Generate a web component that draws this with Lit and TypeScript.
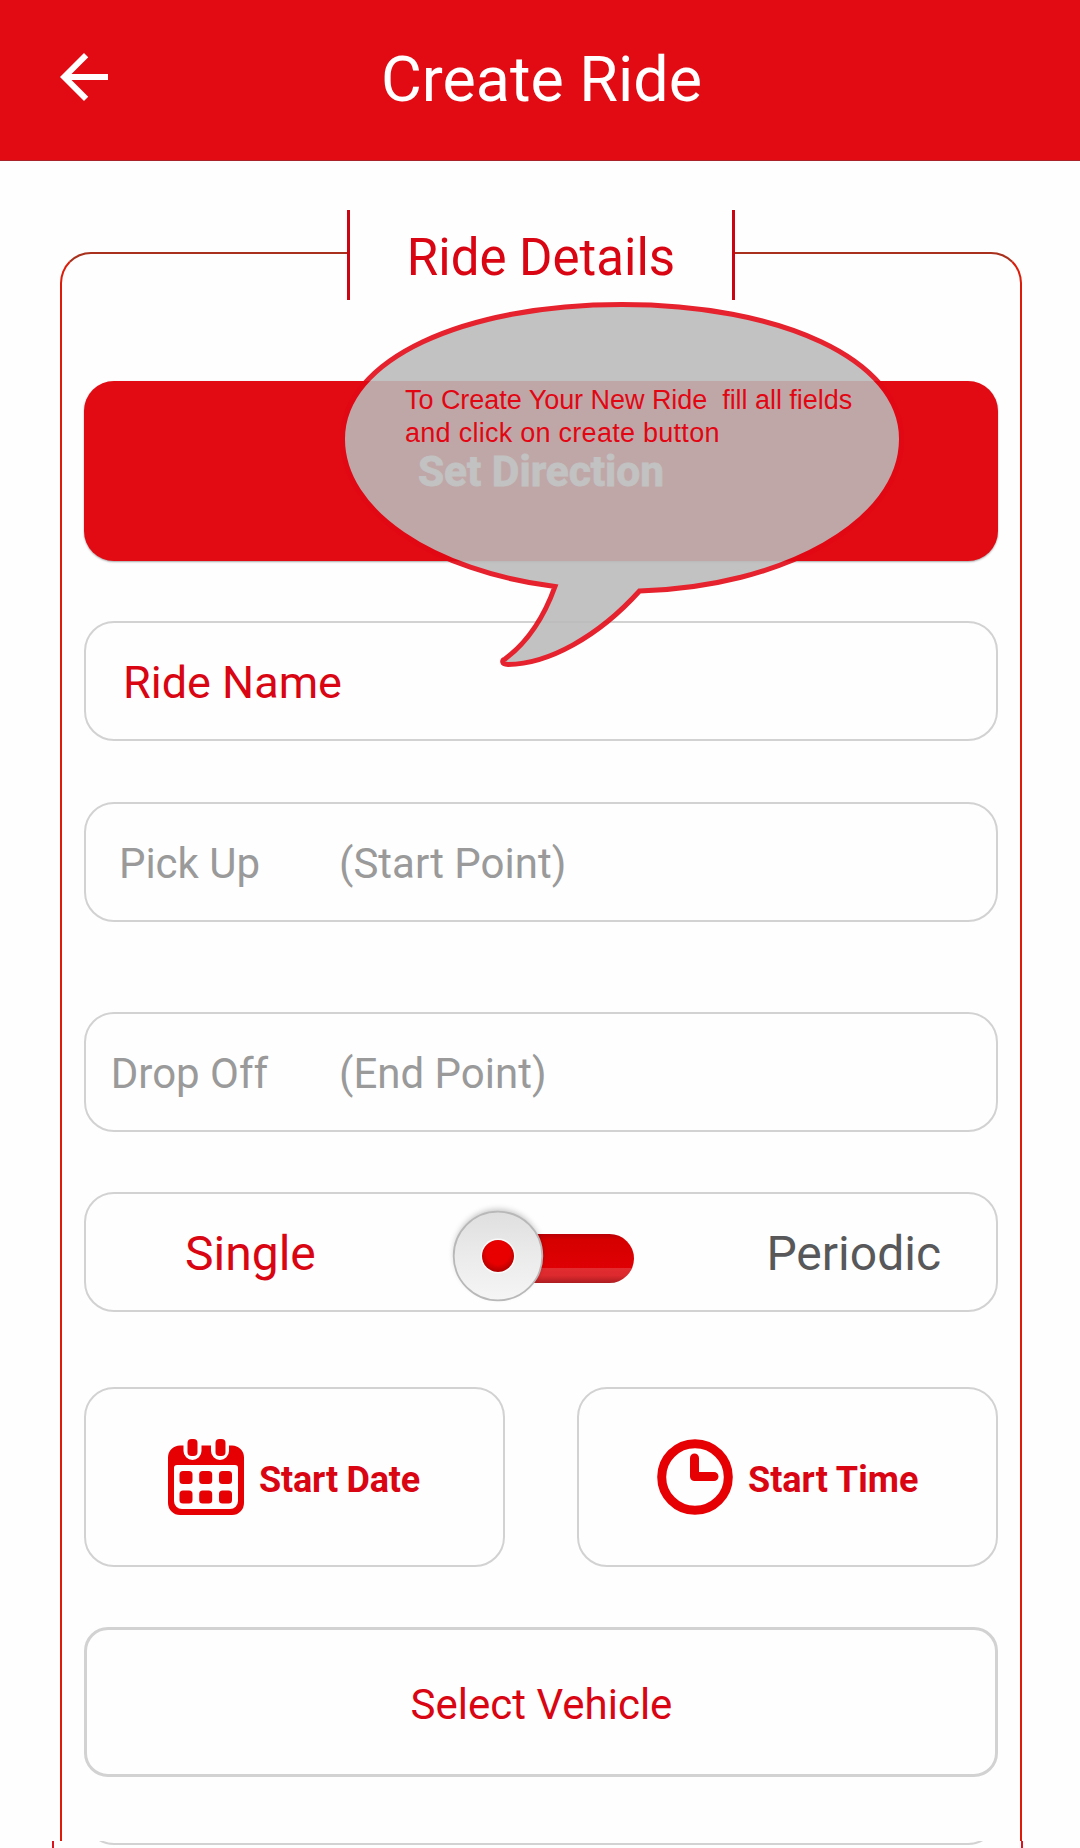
import { LitElement, html, css } from "lit";
import { customElement } from "lit/decorators.js";

@customElement("app-root")
export class AppRoot extends LitElement {
  static styles = css`
    :host {
      display: block;
      height: 1848px;
      overflow: hidden;
      background: #fefefe;
      font-family: Roboto, "Liberation Sans", sans-serif;
      color: #d90512;
    }
    * { box-sizing: border-box; }
    svg { display: block; flex: none; }
    .bar {
      height: 161px;
      background: #e20a13;
      border-bottom: 1px solid #a8242a;
      display: grid;
      grid-template-columns: 120px 1fr 120px;
      align-items: start;
      color: #fff;
    }
    .back { margin: 41px 0 0 48px; }
    .title {
      margin: 0;
      padding-top: 40px;
      text-align: center;
      font-size: 62.8px;
      line-height: 80px;
      font-weight: 400;
      white-space: nowrap;
      padding-left: 3px;
    }
    .frame {
      width: 962px;
      height: 1589px;
      margin: 91px 0 0 60px;
      padding: 0 22px;
      border: 2px solid #dc1c08;
      border-top-color: #a8301c;
      border-bottom: 0;
      border-radius: 31px 31px 0 0;
      display: flex;
      flex-direction: column;
      position: relative;
    }
    .legend {
      flex: none;
      align-self: center;
      width: 388px;
      height: 90px;
      margin: -44px 0 82px;
      background: #fefefe;
      border: solid #cb0412;
      border-width: 0 3px;
      text-align: center;
      font-size: 51px;
      line-height: 96px;
      font-weight: 400;
    }
    .button {
      flex: none;
      height: 180px;
      margin-top: -1px;
      border: 0;
      border-radius: 30px;
      background: #e20a13;
      box-shadow: 0 1px 2px rgba(0, 0, 0, 0.35);
      color: #fff;
      font: 700 42.4px/180px Roboto, sans-serif;
      -webkit-text-stroke: 0.8px #fff;
      text-align: center;
      padding: 1px 0 0;
    }
    .card {
      flex: none;
      border: 2px solid #d2d2d2;
      border-radius: 30px;
      display: flex;
      align-items: center;
    }
    .field { height: 120px; margin-top: 60px; }
    .name { padding: 2px 0 0 37px; font-size: 45px; }
    .point { color: #9a9a9a; font-size: 42px; padding-top: 2px; }
    .pick { margin-top: 61px; }
    .key { width: 207px; text-align: center; }
    .value { margin-left: 46px; }
    .drop { margin-top: 90px; }
    .mode { font-size: 48px; justify-content: space-between; padding: 2px 55px 0 99px; }
    .off { color: #58585a; }
    .toggle { margin: 4px 4px 0 0; }
    .pair { flex: none; display: flex; justify-content: space-between; margin-top: 75px; }
    .tile { width: 421px; height: 180px; font-size: 36px; font-weight: 700; gap: 15px; }
    .label { padding-top: 5px; }
    .date { padding-left: 82px; }
    .date .label { letter-spacing: -0.2px; }
    .time { padding-left: 78px; }
    .select {
      height: 150px;
      margin-top: 60px;
      padding: 4px 0 0 1px;
      border-width: 3px;
      border-radius: 24px;
      justify-content: center;
      font-size: 42px;
    }
    .strip {
      width: 971px;
      height: 7px;
      margin-left: 52px;
      border: solid #dc1420;
      border-width: 0 2px;
      overflow: hidden;
      display: flex;
      align-items: flex-end;
      padding: 0 23px 3px 30px;
    }
    .next { width: 914px; height: 60px; border: 2px solid #d2d2d2; border-radius: 30px; flex: none; }
    .bubble { position: absolute; left: 273px; top: 46px; }
    .tip {
      position: absolute;
      left: 343px;
      top: 130px;
      margin: 0;
      font: 27px/32.6px "Liberation Sans", Arial, sans-serif;
      letter-spacing: -0.04px;
      white-space: pre;
      color: #e20613;
    }
    .wide { letter-spacing: 0.27px; }
  `;

  render() {
    return html`
      <header class="bar">
        <svg class="back" width="72" height="72" viewBox="0 0 24 24" fill="#fff">
          <path d="M20 11H7.83l5.59-5.59L12 4l-8 8 8 8 1.41-1.41L7.83 13H20z" />
        </svg>
        <h1 class="title">Create Ride</h1>
      </header>
      <main class="frame">
        <div class="legend">Ride Details</div>
        <button class="button">Set Direction</button>
        <div class="card field name">Ride Name</div>
        <div class="card field point pick"><span class="key">Pick Up</span><span class="value">(Start Point)</span></div>
        <div class="card field point drop"><span class="key">Drop Off</span><span class="value">(End Point)</span></div>
        <div class="card field mode">
          <span>Single</span>
          <svg class="toggle" width="190" height="110" viewBox="0 0 190 110">
            <defs>
              <linearGradient id="knob" x1="0" y1="0" x2="0" y2="1">
                <stop offset="0" stop-color="#dfdfdf" />
                <stop offset="0.5" stop-color="#ebebeb" />
                <stop offset="1" stop-color="#f5f5f5" />
              </linearGradient>
              <linearGradient id="track" x1="0" y1="0" x2="0" y2="1">
                <stop offset="0" stop-color="#b80006" />
                <stop offset="0.12" stop-color="#d60000" />
                <stop offset="0.69" stop-color="#de0004" />
                <stop offset="0.7" stop-color="#e22c30" />
                <stop offset="0.85" stop-color="#dc2a2e" />
                <stop offset="1" stop-color="#ac1c20" />
              </linearGradient>
              <radialGradient id="dot" cx="0.5" cy="0.4" r="0.6">
                <stop offset="0.6" stop-color="#e80000" />
                <stop offset="1" stop-color="#b00000" />
              </radialGradient>
              <filter id="soft" x="-20%" y="-20%" width="140%" height="140%"><feGaussianBlur stdDeviation="3" /></filter>
            </defs>
            <rect x="50" y="34" width="140" height="49" rx="24.5" fill="url(#track)" />
            <circle cx="54" cy="53" r="43.5" fill="#000" opacity="0.25" filter="url(#soft)" />
            <circle cx="54" cy="56" r="44.300" fill="url(#knob)" stroke="#b8b8b8" stroke-width="1.8" />
            <circle cx="54" cy="56" r="17.5" fill="#fafafa" />
            <circle cx="54" cy="56" r="16" fill="url(#dot)" />
          </svg>
          <span class="off">Periodic</span>
        </div>
        <div class="pair">
          <div class="card tile date">
            <svg width="76" height="76" viewBox="0 0 76 76" fill="#e60004">
              <path fill-rule="evenodd" d="M12 6.500H15.500V12a9 9 0 0 0 18 0V6.500H43V12a9 9 0 0 0 18 0V6.500H64a12 12 0 0 1 12 12V64a12 12 0 0 1-12 12H12A12 12 0 0 1 0 64V18.500a12 12 0 0 1 12-12ZM9 26a3 3 0 0 0-3 3V62a8 8 0 0 0 8 8H62a8 8 0 0 0 8-8V29a3 3 0 0 0-3-3Z" />
              <rect x="19.500" y="0" width="10" height="17" rx="4" />
              <rect x="47.500" y="0" width="10" height="17" rx="4" />
              <rect x="11.500" y="32" width="13" height="13" rx="3.500" />
              <rect x="31.200" y="32" width="13" height="13" rx="3.500" />
              <rect x="51" y="32" width="13" height="13" rx="3.500" />
              <rect x="11.500" y="51.500" width="13" height="13" rx="3.500" />
              <rect x="31.200" y="51.500" width="13" height="13" rx="3.500" />
              <rect x="51" y="51.500" width="13" height="13" rx="3.500" />
            </svg>
            <span class="label">Start Date</span>
          </div>
          <div class="card tile time">
            <svg width="76" height="76" viewBox="0 0 76 76" fill="none" stroke="#e60004" stroke-width="9">
              <circle cx="38" cy="38" r="33.300" />
              <path d="M37.500 19V37.500H57" stroke-linecap="round" stroke-linejoin="round" />
            </svg>
            <span class="label">Start Time</span>
          </div>
        </div>
        <div class="card select">Select Vehicle</div>
        <svg class="bubble" width="575" height="375" viewBox="335 300 575 375">
          <path
            opacity="0.89"
            fill="#bbbbbb"
            stroke="#e20814"
            stroke-width="5"
            d="M555 586.500C433 571 342.500 512 342.500 439C342.500 359 464 304.500 622 304.500S901.500 359 901.500 439C901.500 522 783 587 639.500 591C598 637 548 664 508 664.500C501 664.500 502 660 505 659C528 642 544 617 555 586.500Z"
          />
        </svg>
        <p class="tip">To Create Your New Ride  fill all fields
<span class="wide">and click on create button</span></p>
      </main>
      <div class="strip"><div class="next"></div></div>
    `;
  }
}
